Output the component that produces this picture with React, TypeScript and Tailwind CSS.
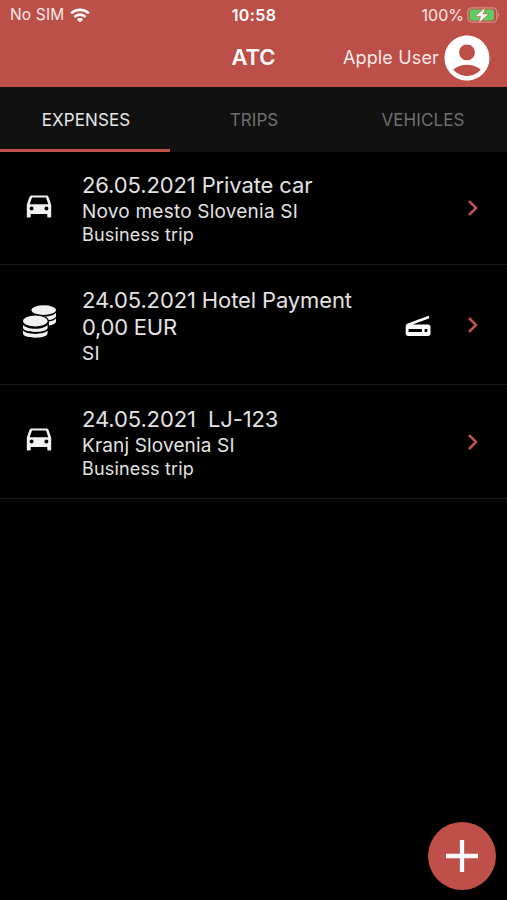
import { MdAccountCircle } from 'react-icons/md'

const expenses = [
  {
    icon: 'car',
    title: '26.05.2021 Private car',
    lines: [
      { text: 'Novo mesto Slovenia SI', className: 'text-[19px] leading-[25px] tracking-[0.22px]' },
      { text: 'Business trip', className: 'text-[18px] leading-[22px] tracking-[0.17px]' },
    ],
    scan: false,
    rowClass: 'h-[113px] pt-px',
  },
  {
    icon: 'coins',
    title: '24.05.2021 Hotel Payment',
    lines: [
      { text: '0,00 EUR', className: 'text-[22px] leading-[27px] tracking-[-0.25px]' },
      { text: 'SI', className: 'text-[19px] leading-[25px] tracking-[0.24px]' },
    ],
    scan: true,
    rowClass: 'h-[120px] pt-[2px]',
  },
  {
    icon: 'car',
    title: '24.05.2021  LJ-123',
    lines: [
      { text: 'Kranj Slovenia SI', className: 'text-[19px] leading-[25px] tracking-[0.15px]' },
      { text: 'Business trip', className: 'text-[18px] leading-[22px] tracking-[0.17px]' },
    ],
    scan: false,
    rowClass: 'h-[114px] pt-px',
  },
]

function WifiIcon() {
  return (
    <svg viewBox="0 0 20 15" className="w-5 h-[15px]" fill="none" stroke="white" strokeWidth="2.7">
      <path d="M1.2 5.4a12.6 12.6 0 0 1 17.6 0" />
      <path d="M4.5 8.9a8 8 0 0 1 11 0" />
      <path d="M10 14.6 6.9 11.5a4.5 4.5 0 0 1 6.2 0z" fill="white" stroke="none" />
    </svg>
  )
}

function BatteryIcon() {
  return (
    <svg viewBox="0 0 33 18" className="w-[33px] h-[18px] -mt-px">
      <rect x="0.8" y="1.8" width="29" height="14.4" rx="4" fill="none" stroke="#d58f89" strokeWidth="1.2" />
      <rect x="2.6" y="3.6" width="24.4" height="10.8" rx="2" fill="#5fce62" />
      <path d="M31 6.6c1.6.8 1.6 4 0 4.8z" fill="#d58f89" />
      <path d="M18.4 1.2 8 10.4h5.6l-2.200 6.800L22 7.900h-5.700z" fill="white" stroke="#bd4f49" strokeWidth="0.6" />
    </svg>
  )
}

function CarIcon() {
  return (
    <svg viewBox="0 0 26 23" className="w-[26px] h-[23px] ml-[4px]" fill="#f1f1f1">
      <path
        fillRule="evenodd"
        d="M5.800.4h14.400c1.200 0 2 .5 2.400 1.600L25.200 9.800v11.600c0 .6-.4 1-1 1h-1.900c-.6 0-1-.4-1-1V19H4.700v2.400c0 .6-.4 1-1 1H1.800c-.6 0-1-.4-1-1V9.800L3.400 2C3.800.9 4.600.4 5.800.4zM6 2.400 3.700 9.200h18.600L20 2.400zM5.600 11.600a2 2 0 1 0 0 4 2 2 0 0 0 0-4zm14.800 0a2 2 0 1 0 0 4 2 2 0 0 0 0-4z"
      />
    </svg>
  )
}

function CoinsIcon() {
  return (
    <svg viewBox="0 0 36 36" className="w-9 h-9 -mt-[4px]" fill="#f1f1f1">
      <ellipse cx="21.7" cy="7.1" rx="12.3" ry="4.9" />
      <path d="M21.5 13.4c6 .2 11-1.400 12.500-3.700v3.200c0 2.300-3.600 3.900-8.200 4.300-1-1.500-2.300-2.900-4.300-3.800z" />
      <path d="M27 18.400c3-.4 5.800-1.400 7-3v3.200c0 1.900-2.900 3.500-7 4z" />
      <ellipse cx="13.3" cy="18" rx="13" ry="6" stroke="#000" strokeWidth="1.2" />
      <path d="M1 21.700c2 2.500 6.700 4 12.300 4s10.300-1.500 12.300-4v3.100c0 2.400-5.500 4.200-12.300 4.200S1 27.200 1 24.800z" />
      <path d="M1 27.600c2 2.200 6.700 3.300 12.300 3.300s10.300-1.100 12.300-3.300v3c0 2.400-5.500 4.200-12.300 4.200S1 33 1 30.600z" />
    </svg>
  )
}

function ScannerIcon() {
  return (
    <svg viewBox="0 0 26 22" className="w-[26px] h-[22px]" fill="white">
      <path d="M23.600.8 24.500 3.200 7.600 9.600H23c1.500 0 2.500 1 2.500 2.500v6.500c0 1.500-1 2.500-2.500 2.500H3.200c-1.500 0-2.500-1-2.500-2.500v-7c0-1.600.6-2.500 2-3.100z" />
      <path d="M3.600 13.900h13.300v3H3.600zM19.600 13.900h2.700v3h-2.700z" fill="black" />
    </svg>
  )
}

function Chevron() {
  return (
    <svg viewBox="0 0 12 18" className="w-3 h-[18px] -mt-px" fill="none" stroke="#bf514c" strokeWidth="2.6">
      <path d="m2 2 7 7-7 7" />
    </svg>
  )
}

export default function App() {
  return (
    <div className="relative flex flex-col w-full h-[900px] bg-black overflow-hidden font-['Inter','Liberation_Sans',sans-serif]">
      <header className="h-[87px] bg-[#bd4f49] text-white">
        <div className="grid grid-cols-3 items-center h-[30px] pl-[10px] pr-[7px] text-[15.5px]">
          <div className="flex items-center gap-[6px] text-[#fbe9e7]">
            <span className="tracking-[0.15px]">No SIM</span>
            <WifiIcon />
          </div>
          <span className="text-center font-semibold text-[16px] tracking-[0.4px] pr-[2px]">10:58</span>
          <div className="flex items-center justify-end gap-[3px] text-[#fbe9e7]">
            <span className="text-[16px]">100%</span>
            <BatteryIcon />
          </div>
        </div>
        <div className="grid grid-cols-[1fr_auto_1fr] items-center h-[55px]">
          <span />
          <h1 className="text-[22px] font-semibold">ATC</h1>
          <div className="flex items-center justify-end pr-[13px] text-[#fbe9e7]">
            <span className="text-[18px] tracking-[0.15px] pr-px whitespace-nowrap">Apple User</span>
            <MdAccountCircle className="size-[54px] shrink-0 text-white" />
          </div>
        </div>
      </header>

      <nav className="grid grid-cols-[170px_168px_169px] h-[65px] bg-[#111111] text-[17px] tracking-[0.1px] text-[#6f6f6f]">
        <button className="pt-[6px] pl-[2px] border-b-[3px] border-[#bf514c] text-[#e6e6e6]">EXPENSES</button>
        <button className="pt-[6px] border-b-[3px] border-transparent">TRIPS</button>
        <button className="pt-[6px] pl-px border-b-[3px] border-transparent">VEHICLES</button>
      </nav>

      <ul className="text-[#e2e2e2]">
        {expenses.map((item) => (
          <li key={item.title} className={`${item.rowClass} flex items-center border-b-[1.5px] border-[#1b1b1b] pr-[28px]`}>
            <div className="w-[82px] pl-[22px] pb-[5px] shrink-0">
              {item.icon === 'car' ? <CarIcon /> : <CoinsIcon />}
            </div>
            <div className="flex-1 whitespace-pre">
              <p className="text-[22px] leading-[28px] tracking-[-0.12px]">{item.title}</p>
              {item.lines.map((line) => (
                <p key={line.text} className={line.className}>{line.text}</p>
              ))}
            </div>
            {item.scan && (
              <div className="mr-[36px]">
                <ScannerIcon />
              </div>
            )}
            <Chevron />
          </li>
        ))}
      </ul>

      <button aria-label="Add" className="absolute right-[11px] bottom-[10px] flex items-center justify-center size-[68px] rounded-full bg-[#bf4f49]">
        <svg viewBox="0 0 32 32" className="size-8" stroke="white" strokeWidth="4.3">
          <path d="M16 0v32M0 16h32" />
        </svg>
      </button>
    </div>
  )
}
